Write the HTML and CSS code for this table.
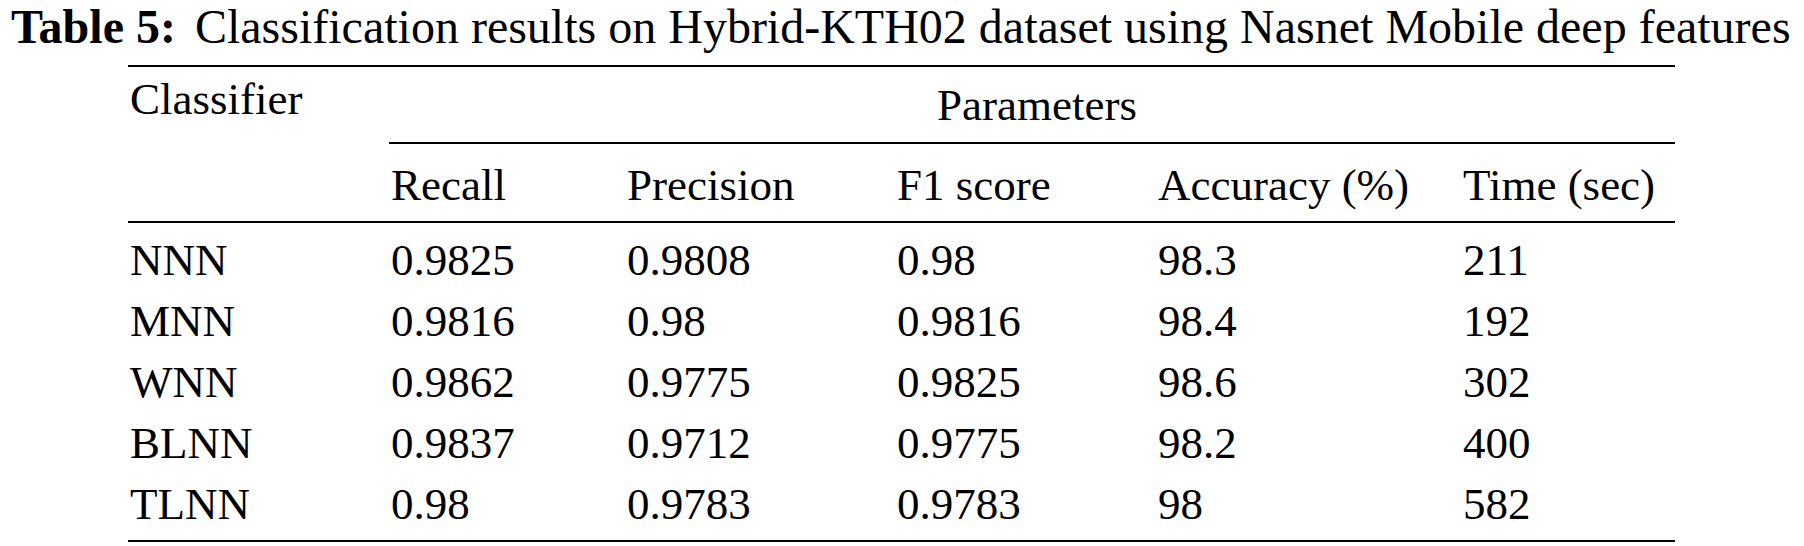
FILE: index.html
```html
<!DOCTYPE html>
<html lang="en">
<head>
<meta charset="utf-8">
<title>Table 5</title>
<link rel="stylesheet" href="styles.css">
</head>
<body>
<div class="page">
  <p class="caption"><span class="label">Table 5:</span><span class="caption-text">Classification results on Hybrid-KTH02 dataset using Nasnet Mobile deep features</span></p>
  <table class="results">
    <colgroup>
      <col class="c-name">
      <col class="c-recall">
      <col class="c-precision">
      <col class="c-f1">
      <col class="c-acc">
      <col class="c-time">
    </colgroup>
    <thead>
      <tr>
        <th class="classifier" rowspan="2">Classifier</th>
        <th class="params" colspan="5">Parameters</th>
      </tr>
      <tr class="subhead">
        <th>Recall</th>
        <th>Precision</th>
        <th>F1 score</th>
        <th>Accuracy (%)</th>
        <th>Time (sec)</th>
      </tr>
    </thead>
    <tbody>
      <tr class="first">
        <td>NNN</td><td>0.9825</td><td>0.9808</td><td>0.98</td><td>98.3</td><td>211</td>
      </tr>
      <tr>
        <td>MNN</td><td>0.9816</td><td>0.98</td><td>0.9816</td><td>98.4</td><td>192</td>
      </tr>
      <tr>
        <td>WNN</td><td>0.9862</td><td>0.9775</td><td>0.9825</td><td>98.6</td><td>302</td>
      </tr>
      <tr>
        <td>BLNN</td><td>0.9837</td><td>0.9712</td><td>0.9775</td><td>98.2</td><td>400</td>
      </tr>
      <tr class="last">
        <td>TLNN</td><td>0.98</td><td>0.9783</td><td>0.9783</td><td>98</td><td>582</td>
      </tr>
    </tbody>
  </table>
</div>
</body>
</html>
```

FILE: styles.css
```css
html, body {
  margin: 0;
  padding: 0;
  background: #ffffff;
}

body {
  font-family: "Liberation Serif", "Times New Roman", serif;
  color: #000000;
  font-size: 45px;
}

.page {
  padding: 0 0 0 11px;
}

.caption {
  margin: 0 0 12px 0;
  font-size: 48px;
  line-height: 53px;
  white-space: nowrap;
}

.label {
  font-weight: bold;
}

.caption-text {
  margin-left: 19px;
}

.results {
  margin-left: 117px;
  width: 1547px;
  border-collapse: separate;
  border-spacing: 0;
  table-layout: fixed;
  border-top: 2px solid #000;
  border-bottom: 2px solid #000;
}

.c-name { width: 261px; }
.c-recall { width: 236px; }
.c-precision { width: 270px; }
.c-f1 { width: 261px; }
.c-acc { width: 305px; }
.c-time { width: 214px; }

.results th,
.results td {
  font-weight: normal;
  text-align: left;
  padding: 0 0 0 2px;
  line-height: 50px;
  white-space: nowrap;
}

.results th.classifier {
  vertical-align: top;
  padding-top: 7px;
  border-bottom: 2px solid #000;
}

.results th.params {
  text-align: left;
  padding: 13px 0 12px 0;
  border-bottom: 2px solid #000;
  text-indent: 548px;
}

.subhead th {
  padding-top: 16px;
  padding-bottom: 11px;
  border-bottom: 2px solid #000;
}

.results td {
  line-height: 61px;
}

.results tr.first td {
  padding-top: 7px;
}

.results tr.last td {
  padding-bottom: 5px;
}
```
